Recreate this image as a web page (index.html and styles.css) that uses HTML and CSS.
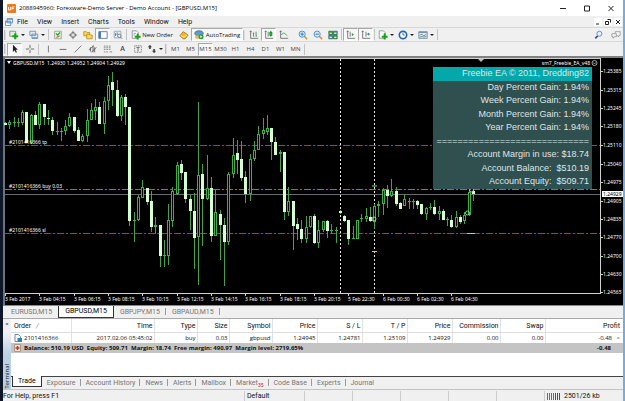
FILE: index.html
```html
<!DOCTYPE html>
<html lang="en">
<head>
<meta charset="utf-8">
<title>2088945960: Forexware-Demo Server - Demo Account - [GBPUSD,M15]</title>
<link rel="stylesheet" href="styles.css">
</head>
<body>
<div class="desktop">
<main class="window">
  <header class="titlebar">
    <svg class="app-icon" viewBox="0 0 9 9"><rect width="9" height="9" rx="1" fill="#e87b22"/><path d="M1.5 3v3h2V3M5 6V3h2.5M5 4.500h2" stroke="#fff" fill="none" stroke-width=".8"/></svg>
    <h1>2088945960: Forexware-Demo Server - Demo Account - [GBPUSD,M15]</h1>
    <div class="win-controls">
      <button aria-label="Minimize"><svg viewBox="0 0 8 8"><path d="M1 4.500h6"/></svg></button>
      <button aria-label="Maximize"><svg viewBox="0 0 8 8"><path d="M1.500 2h5v5h-5z"/></svg></button>
      <button aria-label="Close"><svg viewBox="0 0 8 8"><path d="M1.500 2l5 5M6.500 2l-5 5"/></svg></button>
    </div>
  </header>

  <nav class="menubar">
    <svg class="menu-icon" viewBox="0 0 9 9" fill="#fff" stroke="#5a8bb5"><path d="M2.500.5h6v5h-6zM.5 3.500h6v5h-6z"/><path d="M.5 4.500h6M2.500 1.500h6"/></svg>
    <button>File</button><button>View</button><button>Insert</button><button>Charts</button><button>Tools</button><button>Window</button><button>Help</button>
    <div class="doc-controls">
      <button aria-label="Minimize chart"><svg viewBox="0 0 8 8"><path d="M2 6h3"/></svg></button>
      <button aria-label="Restore chart"><svg viewBox="0 0 8 8"><path d="M3.500 1.500h3v3M1.500 3.500h3v3h-3z"/></svg></button>
      <button aria-label="Close chart"><svg viewBox="0 0 8 8"><path d="M2 2l4 4M6 2l-4 4"/></svg></button>
    </div>
  </nav>

  <div class="toolbar main-tools">
    <i class="grip"></i>
    <button class="drop" aria-label="New chart"><svg viewBox="0 0 12 12"><path d="M1 1.500h7v6H1z" fill="#dfeee0" stroke="#6b8f75"/><path d="M7.500 4v7M4 7.500h7" stroke="#18a418" stroke-width="2.600"/></svg></button>
    <button class="drop" aria-label="Profiles"><svg viewBox="0 0 12 12" fill="#dceaf5" stroke="#6d8ba5"><path d="M1 1.500h7v5H1zM3.500 5h7v5h-7z"/><path d="M4 9.500h6" stroke="#3b78ad"/></svg></button>
    <i class="sep"></i>
    <button aria-label="Market Watch"><svg viewBox="0 0 12 12"><path d="M2 1.500h8v9H2z" fill="#e9f2e6" stroke="#8aa387"/><path d="M3.500 4l2 2 3-3" stroke="#26a126" fill="none" stroke-width="1.500"/><path d="M4 9l4-2" stroke="#d36b30" stroke-width="1.500"/></svg></button>
    <button aria-label="Data Window"><svg viewBox="0 0 12 12" fill="none" stroke="#666"><circle cx="6" cy="6" r="3"/><path d="M6 1v4M6 7v4M1 6h4M7 6h4"/></svg></button>
    <button aria-label="Folders"><svg viewBox="0 0 12 12" fill="#ffd95c" stroke="#b98b1d"><path d="M1 2h3l1 1h3v4H1z"/><path d="M4.500 5h3l1 1h2.500v4.500H4.500z"/></svg></button>
    <button class="on" aria-label="Navigator"><svg viewBox="0 0 12 12"><path d="M1 2h10v8H1z" fill="#fff" stroke="#4c6f98"/><path d="M1 2h2.500v8H1z" fill="#4077b4"/></svg></button>
    <button aria-label="Strategy Tester"><svg viewBox="0 0 12 12"><path d="M1.500 1.500h8v8h-8z" fill="#e5edf3" stroke="#8ea3b5"/><path d="M3 7V4M5 6V3" stroke="#467"/><circle cx="7.500" cy="7" r="2" fill="#eef" stroke="#678"/><path d="M9 8.500l2 2" stroke="#678"/></svg></button>
    <i class="sep"></i>
    <button class="text-btn order"><svg viewBox="0 0 12 12"><path d="M1.500 1h5l2 2v7h-7z" fill="#fff" stroke="#789"/><path d="M3 4h3M3 6h2" stroke="#89a"/><path d="M8 4.500v7M4.500 8h7" stroke="#18a418" stroke-width="2.400"/></svg>New Order</button>
    <button aria-label="MetaEditor"><svg viewBox="0 0 12 12"><path d="M1 7l4-5 6 4-3.500 4.500H5z" fill="#f4b72e" stroke="#a9730c"/><path d="M2 7l4 1.500L10 6" stroke="#fff0a8" fill="none"/></svg></button>
    <button class="text-btn auto on"><svg viewBox="0 0 12 12"><ellipse cx="6" cy="4" rx="5" ry="3" fill="#5a9bd0" stroke="#346f9f"/><path d="M1 6.500h6v4H2z" fill="#e6bd4b"/><circle cx="8.500" cy="8" r="3" fill="#20a437"/><path d="M7.600 6.400v3.200l2.400-1.600z" fill="#fff"/></svg>AutoTrading</button>
    <i class="grip"></i>
    <button aria-label="Bar chart"><svg viewBox="0 0 12 12" fill="none" stroke="#666"><path d="M2 1v9h9M1 2.500l1-1.500 1 1.500"/><path d="M5.500 3v5M8.500 2v6M4.500 4h1M8.500 7h1" stroke="#384"/></svg></button>
    <button class="on" aria-label="Candlesticks"><svg viewBox="0 0 12 12" fill="none" stroke="#666"><path d="M2 1v9h9M1 2.500l1-1.500 1 1.500"/><path d="M5 2v6M8 1v7" stroke="#384"/><path d="M7 2.500h2.500v4H7z" fill="#2fc04a" stroke="#197a2a"/></svg></button>
    <button aria-label="Line chart"><svg viewBox="0 0 12 12" fill="none" stroke="#666"><path d="M2 1v9h9M1 2.500l1-1.500 1 1.500"/><path d="M3 6c2-4 4-2 7 1" stroke="#2b9a3c"/></svg></button>
    <i class="gap"></i>
    <button aria-label="Zoom in"><svg viewBox="0 0 12 12"><path d="M7.500 7.500l3.500 3.500" stroke="#d79c2a" stroke-width="2"/><circle cx="5" cy="5" r="3.700" fill="#d4eafb" stroke="#3e82bd"/><path d="M3 5h4M5 3v4" stroke="#236aa6"/></svg></button>
    <button aria-label="Zoom out"><svg viewBox="0 0 12 12"><path d="M7.500 7.500l3.500 3.500" stroke="#d79c2a" stroke-width="2"/><circle cx="5" cy="5" r="3.700" fill="#d4eafb" stroke="#3e82bd"/><path d="M3 5h4" stroke="#236aa6"/></svg></button>
    <button aria-label="Tile windows"><svg viewBox="0 0 12 12"><path d="M1 1.500h4.500v4H1zM6.500 6.500H11v4H6.500z" fill="#49b45a" stroke="#296b37"/><path d="M6.500 1.500H11v4H6.500zM1 6.500h4.500v4H1z" fill="#6fae8b" stroke="#2c5b72"/><path d="M2 4h2.500M7.500 4H10M2 9h2.500M7.500 9H10" stroke="#fff"/></svg></button>
    <i class="sep"></i>
    <button class="on" aria-label="Auto scroll"><svg viewBox="0 0 12 12" fill="none" stroke="#666"><path d="M2 1v9h9M1 2.500l1-1.500 1 1.500M5 2v6"/><path d="M7 3.500v4L9.500 5.500z" fill="#2b9a3c" stroke="none"/></svg></button>
    <button class="on" aria-label="Chart shift"><svg viewBox="0 0 12 12" fill="none" stroke="#666"><path d="M2 1v9h9M1 2.500l1-1.500 1 1.500M6 2v6"/><path d="M7 5h4M9 3.500v3" stroke="#2b7f5c"/></svg></button>
    <i class="sep"></i>
    <button class="drop" aria-label="Indicators"><svg viewBox="0 0 12 12"><path d="M1.500 1h5l2 2v7h-7z" fill="#fff" stroke="#798"/><path d="M8 4v7.500M4.500 8h7" stroke="#18a418" stroke-width="2.400"/></svg></button>
    <button class="drop" aria-label="Periods"><svg viewBox="0 0 12 12"><circle cx="6" cy="6" r="4.400" fill="#fff" stroke="#2168ae" stroke-width="2"/><path d="M6 3.500V6h2" stroke="#456" fill="none"/></svg></button>
    <button class="drop" aria-label="Templates"><svg viewBox="0 0 12 12"><path d="M1 2h10v8H1z" fill="#e3edf4" stroke="#66859d"/><path d="M1 3h10" stroke="#66859d"/><path d="M2 6l3-1 2 2 3-2M2 8.500l3-1 2 1 3-1" fill="none" stroke="#598b7a"/></svg></button>
    <i class="sep"></i>
    <div class="tool-right">
      <button aria-label="Search"><svg viewBox="0 0 12 12"><path d="M4.500 7L1.500 10" stroke="#2b4f93" stroke-width="2"/><circle cx="6.500" cy="4.500" r="3" fill="#e5efff" stroke="#5c80b8"/></svg></button>
      <button aria-label="Chat"><svg viewBox="0 0 12 12" fill="#f5f5f5" stroke="#999"><path d="M5 2h6v4.500H9.500l-.5 2-1.500-2H5z"/><path d="M1 4.500h5.500V8H4l-1.500 2V8H1z"/></svg></button>
    </div>
  </div>

  <div class="toolbar line-tools">
    <i class="grip"></i>
    <button class="on" aria-label="Cursor"><svg viewBox="0 0 12 12"><path d="M3.500 1v8.500l2-2 1.500 3 1.300-.7L7 7h2.500z" fill="#222"/></svg></button>
    <button aria-label="Crosshair"><svg viewBox="0 0 12 12"><path d="M6 1v4M6 7v4M1 6h4M7 6h4" stroke="#555"/></svg></button>
    <i class="sep"></i>
    <button aria-label="Vertical line"><svg viewBox="0 0 12 12"><path d="M6.500 2v8" stroke="#666"/></svg></button>
    <button aria-label="Horizontal line"><svg viewBox="0 0 12 12"><path d="M2 6.500h8" stroke="#555"/></svg></button>
    <button aria-label="Trendline"><svg viewBox="0 0 12 12"><path d="M2 10l8-8" stroke="#666"/></svg></button>
    <button aria-label="Channel"><svg viewBox="0 0 12 12" stroke="#555"><path d="M1 7l6-5M4 10l6-6M3 4v5M6 2v8M8 4v6"/></svg></button>
    <button aria-label="Fibonacci"><svg viewBox="0 0 12 12" stroke="#777"><path d="M1 2.500h9M1 4.500h9M1 6.500h9M1 9.500h6" stroke-dasharray="2 1"/><path d="M8 9.500h3"/></svg></button>
    <button class="glyph">A</button>
    <button aria-label="Text label"><svg viewBox="0 0 12 12" fill="none" stroke="#555"><path d="M2 2h8v8H2z" stroke-dasharray="1 1"/><path d="M4 4h4M6 4v5"/></svg></button>
    <button class="drop" aria-label="Arrows"><svg viewBox="0 0 12 12" fill="#444"><path d="M1 4l2.500-3L6 4H4.500v2h-2V4zM6 8l2.500 3L11 8H9.500V6h-2v2z"/></svg></button>
    <i class="grip"></i>
    <button>M1</button><button>M5</button><button class="on">M15</button><button>M30</button><button>H1</button><button>H4</button><button>D1</button><button>W1</button><button>MN</button>
    <i class="sep"></i>
  </div>

  <section class="chart">
    <svg id="plot" viewBox="3 56 620 249" role="img" aria-label="GBPUSD M15 candlestick chart">
      <rect x="3" y="56" width="620" height="249" fill="#000"/>
      <path d="M3 57h620" stroke="#808080" stroke-width="2"/>
      <path d="M4 57v248" stroke="#66757c" stroke-width="2"/>
      <path class="axis" d="M5 58.500h596M600.500 58v236M5 293.500h596"/>
      <path d="M478 59h6l-3 3z" fill="#bbb"/>
      <g class="levels">
        <path class="stop" d="M5 145.500h595M5 233.500h595"/>
        <path class="entry" d="M5 189.500h595"/>
        <path class="price" d="M5 194.500h595"/>
        <path class="split" d="M340.500 59v234M374.500 59v234"/>
      </g>
      <g id="candles"></g>
      <g class="marks"><circle cx="374" cy="219" r="2"/><circle cx="467.500" cy="213" r="2"/><circle cx="471.500" cy="190" r="2"/><path d="M467 233.500h8M372 186h5M372 251.500h5"/></g>
      <path d="M7 61h4l-2 3z" fill="#fff"/>
      <text x="13" y="65">GBPUSD,M15&#160; 1.24930 1.24952 1.24904 1.24929</text>
      <text x="9" y="144">#2101416366 tp</text>
      <text x="9" y="188">#2101416366 buy 0.03</text>
      <text x="9" y="232">#2101416366 sl</text>
      <text x="590" y="65" text-anchor="end">sm7_Freebie_EA_v48</text>
      <circle cx="594.500" cy="63" r="2.500" fill="none" stroke="#ccc" stroke-width=".8"/><path d="M593.500 63.500h2M593.500 62.500h.5M595 62.500h.5" stroke="#ccc" stroke-width=".6"/>
      <g id="price-scale"></g>
      <g id="time-scale"></g>
    </svg>
    <aside class="ea-panel">
      <h2>Freebie EA © 2011, Dredding82</h2>
      <p>Day Percent Gain: 1.94%</p>
      <p>Week Percent Gain: 1.94%</p>
      <p>Month Percent Gain: 1.94%</p>
      <p>Year Percent Gain: 1.94%</p>
      <p>=============================</p>
      <p>Account Margin in use: $18.74</p>
      <p>Account Balance: &nbsp;$510.19</p>
      <p>Account Equity: &nbsp;$509.71</p>
    </aside>
  </section>

  <nav class="chart-tabs">
    <button>EURUSD,M15</button><button class="active">GBPUSD,M15</button><button>GBPJPY,M15</button><button>GBPAUD,M15</button>
  </nav>

  <section class="terminal">
    <div class="side"><button aria-label="Close terminal">×</button><span>Terminal</span></div>
    <div class="term-body">
      <table>
        <colgroup><col class="c-order"><col class="c-time"><col class="c-type"><col class="c-size"><col class="c-sym"><col class="c-num"><col class="c-num"><col class="c-num"><col class="c-num"><col class="c-com"><col class="c-num"><col></colgroup>
        <thead><tr><th>Order <i>/</i></th><th>Time</th><th>Type</th><th>Size</th><th>Symbol</th><th>Price</th><th>S / L</th><th>T / P</th><th>Price</th><th>Commission</th><th>Swap</th><th>Profit</th></tr></thead>
        <tbody>
          <tr><td><svg viewBox="0 0 8 8"><path d="M1 .5h3.500L6.500 2.500v5H1z" fill="#fff" stroke="#789"/><path d="M3.500 4H8v4H3.500z" fill="#2d83b5"/></svg>2101416366</td><td>2017.02.06 05:45:02</td><td>buy</td><td>0.03</td><td>gbpusd</td><td>1.24945</td><td>1.24781</td><td>1.25109</td><td>1.24929</td><td>0.00</td><td>0.00</td><td>-0.48 <button aria-label="Close order">×</button></td></tr>
          <tr class="balance"><td colspan="11"><svg viewBox="0 0 8 8"><path d="M.5.5h6v7h-6z" fill="#f3dfd6" stroke="#a98"/><path d="M1.500 4h4M3.500 2v4" stroke="#b4412b" stroke-width="1.500"/></svg>Balance: 510.19 USD&nbsp; Equity: 509.71&nbsp; Margin: 18.74&nbsp; Free margin: 490.97&nbsp; Margin level: 2719.65%</td><td>-0.48</td></tr>
        </tbody>
      </table>
      <nav class="term-tabs">
        <button class="active">Trade</button><button>Exposure</button><button>Account History</button><button>News</button><button>Alerts</button><button>Mailbox</button><button>Market<sub>35</sub></button><button>Code Base</button><button>Experts</button><button>Journal</button>
      </nav>
    </div>
  </section>

  <footer class="status">
    <span class="help">For Help, press F1</span>
    <span class="profile">Default</span>
    <span></span><span></span><span></span><span></span><span></span>
    <span class="net"><svg viewBox="0 0 14 8"><path d="M.5 1v7M2.500 1v7M4.500 1v7M6.500 1v7" stroke="#269b35"/><path d="M8.500 1v7M10.500 1v7M12.500 1v7" stroke="#245b9b"/></svg>2501/26 kb</span>
  </footer>
</main>
</div>
<script src="chart.js"></script>
</body>
</html>
```
FILE: styles.css
```css
* { box-sizing: border-box; }
body { margin: 0; background: #0b1220; color: #111; font: 6px/10px "Open Sans", "Noto Sans", sans-serif; }
button { margin: 0; padding: 0; border: 0; background: none; color: inherit; font: inherit; white-space: nowrap; }
svg { display: block; }
h1, h2, p { margin: 0; font: inherit; }
.desktop { min-height: 100vh; padding: 0 2px 0 3px; background: linear-gradient(90deg, #0d1728 50%, #72aede 50%); }
.window { display: flex; flex-direction: column; min-height: 100vh; background: #f0f0f0; }

.titlebar { display: flex; align-items: center; gap: 3px; height: 16px; padding-left: 4px; background: #fff; color: #000; }
.titlebar h1 { flex: 1; }
.app-icon { width: 9px; height: 9px; }
.win-controls { display: flex; gap: 16px; padding-right: 8px; }
.win-controls svg, .doc-controls svg { width: 8px; height: 8px; fill: none; stroke: #222; }

.menubar { display: flex; align-items: center; gap: 9px; height: 11px; padding-left: 2px; font: 7px/10px Roboto, sans-serif; }
.menubar .menu-icon { width: 8px; height: 8px; margin-right: -5px; }
.doc-controls { display: flex; gap: 2px; margin-left: auto; padding-right: 1px; }
.doc-controls button { background: #fff; }

.toolbar { display: flex; align-items: center; height: 14px; padding-left: 1px; border-top: 1px solid #d8d8d8; }
.line-tools { height: 15px; }
.toolbar button { display: flex; flex: none; align-items: center; justify-content: center; width: 15px; height: 13px; border: 1px solid transparent; color: #444; }
.toolbar svg { flex: none; width: 10px; height: 10px; }
.toolbar .on { border-color: #a8a8a8 #fff #fff #a8a8a8; background: #f8f8f8; }
.toolbar .drop { width: 20px; gap: 2px; }
.toolbar .drop::after { content: ""; border: 2px solid transparent; border-top-color: #222; border-bottom: 0; }
.toolbar .text-btn { width: 48px; gap: 1px; color: #111; }
.toolbar .auto { width: 52px; gap: 2px; }
.toolbar .glyph { font-size: 7px; font-weight: 600; }
.grip { flex: none; width: 2px; height: 10px; margin-right: 1px; border-left: 1px solid #bbb; border-right: 1px solid #ddd; }
.sep { flex: none; width: 1px; height: 11px; margin: 0 1px; background: #c4c4c4; }
.gap { width: 4px; }
.tool-right { display: flex; gap: 2px; margin-left: auto; }

.chart { position: relative; }
#plot { width: 100%; height: auto; }
#plot text { fill: #fff; font: 5px "Noto Sans", sans-serif; }
#plot .axis { fill: none; stroke: #d0d0d0; }
.levels path { fill: none; stroke-width: 1; shape-rendering: crispEdges; }
.levels .stop { stroke: #c93030; stroke-dasharray: 7 2 2 2; }
.levels .entry { stroke: #4b9455; stroke-dasharray: 7 2 2 2; }
.levels .price { stroke: #646b73; }
.levels .split { stroke: #e8e8e8; stroke-dasharray: 2 2; }
.wick { stroke: #46a04e; }
.hollow { fill: #000; stroke: #3fae49; }
.solid { fill: #d5ffd2; stroke: none; }
.marks { fill: none; stroke: #8de394; }
.tick { stroke: #d0d0d0; }
#plot .now { fill: #000; }

.ea-panel { position: absolute; top: 11px; right: 31px; display: grid; grid-template-rows: repeat(9, 1fr); width: 159px; height: 122px; background: #304f4f; color: #dfe6e6; font: 9px/13px "Liberation Sans", sans-serif; text-align: right; white-space: nowrap; }
.ea-panel > * { padding-right: 3px; }
.ea-panel h2 { background: #05a8aa; }

.chart-tabs { display: flex; height: 13px; padding-left: 2px; color: #777; border-top: 1px solid #888; font: 7px/10px Roboto, sans-serif; }
.chart-tabs button { padding: 0 6px; line-height: 9px; }
.chart-tabs .active { border: 1px solid #333; border-top: 0; background: #fff; color: #000; }
.chart-tabs button:nth-child(n+3) { background: linear-gradient(#999, #999) right 2px / 1px 7px no-repeat; }

.terminal { display: flex; flex: 1; border-top: 1px solid #aaa; }
.side { display: flex; flex-direction: column; align-items: center; justify-content: space-between; width: 8px; background: linear-gradient(#f0f0f0 20%, #bcd0e4 50%); }
.side span { writing-mode: vertical-rl; transform: rotate(180deg); line-height: 8px; }
.term-body { display: flex; flex: 1; flex-direction: column; background: #fff; }
table { width: 100%; table-layout: fixed; border-collapse: collapse; }
.c-order { width: 60px; } .c-time { width: 83px; } .c-type { width: 43px; } .c-size { width: 32px; } .c-sym { width: 43px; } .c-num { width: 45px; } .c-com { width: 48px; }
th, td { padding: 0 1px; border-right: 1px solid #e2e2e2; font-weight: 400; text-align: right; white-space: nowrap; }
th:first-child, td:first-child { padding-left: 3px; text-align: left; }
th:last-child, td:last-child { padding-right: 3px; border-right: 0; }
th { height: 13px; padding-top: 2px; border-bottom: 1px solid #ddd; font: 7px/10px Roboto, sans-serif; }
th i { margin-left: 3px; color: #888; }
td { height: 11px; }
td svg { display: inline-block; width: 8px; height: 8px; margin-right: 2px; vertical-align: -2px; }
td button { margin-left: 3px; color: #666; line-height: 8px; }
.balance td { height: 10px; border: 0; background: #c4c4c4; font-weight: 700; }
.balance td:last-child { padding-right: 12px; }

.term-tabs { display: flex; height: 13px; margin-top: auto; border-top: 1px solid #444; background: #f0f0f0; color: #777; font: 7px/10px Roboto, sans-serif; }
.term-tabs button { padding: 0 5px; line-height: 10px; background: linear-gradient(#999, #999) right 2px / 1px 7px no-repeat; }
.term-tabs .active { height: 11px; margin: -1px 0 0 1px; border: 1px solid #333; border-top: 0; background: #fff; color: #000; }
.term-tabs button:last-child { background: none; }
.term-tabs sub { color: #c22; font-size: 5px; line-height: 5px; }

.status { display: flex; align-items: center; height: 12px; border-top: 1px solid #c4c4c4; font: 7px/10px Roboto, sans-serif; }
.status span { width: 48px; height: 10px; padding-left: 2px; border-left: 1px solid #ccc; white-space: nowrap; }
.status .help { flex: 1; padding-left: 0; border: 0; }
.status .profile { width: 60px; }
.status .net { display: flex; align-items: center; gap: 3px; width: 79px; }
.net svg { width: 14px; height: 8px; }
```
FILE: chart.js
```js
const NS = 'http://www.w3.org/2000/svg';
const plot = (parent, tag, attrs, text) => {
  const node = document.createElementNS(NS, tag);
  for (const key in attrs) node.setAttribute(key, attrs[key]);
  if (text) node.textContent = text;
  document.getElementById(parent).appendChild(node);
};

// One candle per entry: wick top, wick bottom, body top, body bottom, 1 when the close is below the open.
const candles = [
  [122,125,123,125,1],[120,129,122,125,0],[117,127,122,123,0],[118,127,122,123,0],[110,125,112,123,0],
  [112,143,112,143,1],[114,144,115,143,0],[111,125,115,125,1],[102,129,104,125,0],[104,125,104,117,1],
  [110,125,118,119,1],[117,135,120,131,1],[122,135,131,132,0],[128,141,131,132,0],[120,135,126,131,0],
  [113,127,117,126,0],[117,133,117,131,1],[127,141,130,141,1],[134,142,136,141,0],[109,142,120,136,0],
  [103,120,110,120,0],[99,120,107,111,0],[102,124,107,124,1],[97,134,101,124,0],[76,110,85,101,0],
  [72,106,82,90,1],[80,117,90,116,1],[95,121,97,116,0],[94,125,97,107,1],[107,226,107,221,1],
  [212,242,220,221,0],[195,221,197,220,0],[180,198,187,198,0],[188,205,188,202,1],[191,232,201,227,1],
  [217,234,225,227,0],[225,267,225,256,1],[240,267,255,256,0],[204,265,220,256,0],[187,227,191,221,0],
  [162,195,165,194,0],[160,180,164,173,1],[172,203,172,199,1],[195,230,199,211,1],[193,269,211,238,1],
  [102,285,175,237,0],[164,246,174,199,1],[155,200,188,199,0],[177,242,188,236,1],[190,236,212,236,0],
  [210,260,214,225,1],[218,286,225,242,1],[172,245,174,242,0],[138,178,155,174,0],[140,174,153,160,1],
  [141,181,159,178,1],[171,203,177,194,1],[154,201,159,194,0],[141,161,150,159,0],[126,150,134,150,0],
  [118,139,130,134,0],[115,135,128,132,0],[128,160,128,142,1],[137,155,142,155,1],[150,172,152,154,0],
  [152,220,152,212,1],[187,216,201,212,0],[201,250,201,226,1],[218,240,224,229,1],[220,243,229,239,1],
  [216,243,227,239,0],[216,228,216,227,0],[214,244,216,243,1],[220,248,230,243,0],[221,232,221,230,0],
  [220,238,221,231,1],[224,234,230,231,0],[227,243,230,231,0],[210,214,211,213,1],[215,222,216,221,1],
  [220,245,220,239,1],[226,239,238,239,0],[220,239,220,239,0],[214,222,218,219,0],[208,222,216,219,0],
  [207,222,217,221,1],[204,229,206,222,0],[201,217,204,206,0],[188,215,190,204,0],[185,208,190,196,1],
  [179,197,191,196,0],[187,206,191,204,1],[202,209,203,209,1],[194,206,199,206,0],[198,209,201,202,0],
  [199,209,201,202,0],[200,209,201,205,1],[204,215,204,214,1],[207,220,208,214,0],[203,210,207,208,0],
  [200,215,207,214,1],[206,220,211,214,0],[209,220,211,220,1],[217,226,219,220,0],[215,228,220,227,1],
  [211,228,217,227,0],[215,224,217,222,1],[212,224,215,221,0],[190,216,192,215,0],[190,201,191,194,1]
];
candles.forEach(([high, low, top, bottom, falling], i) => {
  const x = 5.5 + Math.round(i * 4.293);
  plot('candles', 'path', { class: 'wick', d: `M${x} ${high}V${low}` });
  plot('candles', 'rect', falling
    ? { class: 'solid', x: x - 1.5, y: top, width: 3, height: bottom - top }
    : { class: 'hollow', x: x - 1, y: top + 0.5, width: 2, height: Math.max(bottom - top - 1, 0.1) });
});

[['1.25385', 71], ['1.25315', 90], ['1.25245', 108], ['1.25180', 126], ['1.25110', 145], ['1.25040', 164],
 ['1.24975', 182], ['1.24905', 201], ['1.24835', 219], ['1.24770', 237], ['1.24700', 256], ['1.24630', 274],
 ['1.24565', 292]].forEach(([label, y]) => {
  plot('price-scale', 'path', { class: 'tick', d: `M601 ${y + 0.5}h2` });
  plot('price-scale', 'text', { x: 603, y: y + 2 }, label);
});
plot('price-scale', 'rect', { x: 602, y: 191, width: 21, height: 6, fill: '#fff' });
plot('price-scale', 'text', { class: 'now', x: 603, y: 196 }, '1.24929');

['3 Feb 2017', '3 Feb 04:15', '3 Feb 06:15', '3 Feb 08:15', '3 Feb 10:15', '3 Feb 12:15', '3 Feb 14:15',
 '3 Feb 16:15', '3 Feb 18:15', '3 Feb 20:15', '5 Feb 22:30', '6 Feb 00:30', '6 Feb 02:30', '6 Feb 04:30'
].forEach((label, i) => {
  const x = 5 + Math.round(i * 34.34);
  plot('time-scale', 'path', { class: 'tick', d: `M${x + 0.5} 294v2` });
  plot('time-scale', 'text', { x: x, y: 301 }, label);
});
```
